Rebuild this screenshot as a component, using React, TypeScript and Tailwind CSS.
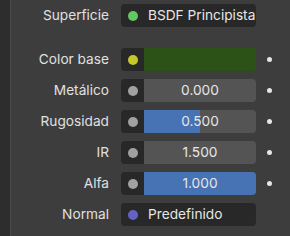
import React from "react";

type Row = {
    label: string;
    kind: "enum" | "color" | "slider";
    socket: string;
    text?: string;
    value?: string;
    fill?: number;
    anim?: boolean;
};

const rows: Row[] = [
    {label: "Color base", kind: "color", socket: "bg-[#c7c729]", anim: true},
    {label: "Metálico", kind: "slider", socket: "bg-[#a1a1a1]", value: "0.000", fill: 0, anim: true},
    {label: "Rugosidad", kind: "slider", socket: "bg-[#a1a1a1]", value: "0.500", fill: 0.5, anim: true},
    {label: "IR", kind: "slider", socket: "bg-[#a1a1a1]", value: "1.500", fill: 0, anim: true},
    {label: "Alfa", kind: "slider", socket: "bg-[#a1a1a1]", value: "1.000", fill: 1, anim: true},
    {label: "Normal", kind: "enum", socket: "bg-[#6363c7]", text: "Predefinido"},
];

function Field({row}: {row: Row}) {
    if (row.kind === "enum") {
        return (
            <div className="ml-[12px] w-[135px] h-full rounded-[4px] bg-[#282828] flex items-center">
                <span className={`ml-[7px] w-[10px] h-[10px] rounded-full ${row.socket}`}/>
                <span className="ml-[10px] text-[#e6e6e6] whitespace-nowrap">{row.text}</span>
            </div>
        );
    }
    return (
        <div className="ml-[12px] w-[135px] h-full rounded-[4px] overflow-hidden flex">
            <div className="w-[23px] h-full bg-[#282828] flex items-center justify-center">
                <span className={`w-[10px] h-[10px] rounded-full ${row.socket}`}/>
            </div>
            {row.kind === "color" ? (
                <div className="flex-1 h-full bg-[#2d5218]"/>
            ) : (
                <div className="flex-1 h-full bg-[#545454] relative flex items-center justify-center">
                    <div
                        className="absolute left-0 top-0 bottom-0 bg-[#4772b3]"
                        style={{width: `${(row.fill || 0) * 100}%`}}
                    />
                    <span className="relative text-[#e6e6e6]">{row.value}</span>
                </div>
            )}
        </div>
    );
}

function Line({row}: {row: Row}) {
    return (
        <div className="flex items-center h-[23px]">
            <div className="w-[98px] text-right text-[#e0e0e0] whitespace-nowrap">{row.label}</div>
            <Field row={row}/>
            <div className="w-[26px] flex justify-center">
                {row.anim && <span className="w-[5px] h-[5px] rounded-full bg-[#e6e6e6]"/>}
            </div>
        </div>
    );
}

export default function App() {
    return (
        <div
            className="w-[290px] h-[236px] flex overflow-hidden text-[13.7px] leading-none"
            style={{fontFamily: "Inter, 'DejaVu Sans', sans-serif"}}
        >
            <div className="w-[10px] h-full bg-[#2d2d2d]"/>
            <div className="w-px h-full bg-[#4a4a4a]"/>
            <div className="flex-1 h-full bg-[#3d3d3d] pt-[4px] flex flex-col">
                <Line row={{label: "Superficie", kind: "enum", socket: "bg-[#63c763]", text: "BSDF Principista"}}/>
                <div className="mt-[21px] flex flex-col gap-[8px]">
                    {rows.map((r) => (
                        <Line key={r.label} row={r}/>
                    ))}
                </div>
            </div>
        </div>
    );
}
